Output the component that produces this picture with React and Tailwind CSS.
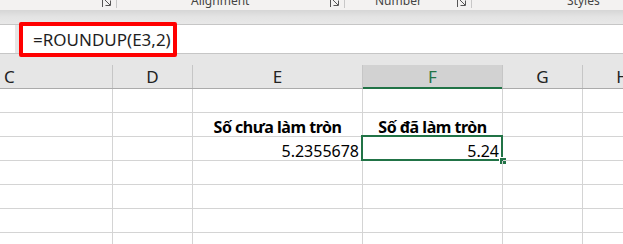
import React from "react";

function Launcher() {
  return (
    <span className="flex items-start h-[10px] overflow-hidden">
      <svg width="11" height="10" viewBox="0 0 11 10" className="mt-[-3px]" fill="none" stroke="#555" strokeWidth="1">
        <path d="M0.5 0.5 V10" />
        <path d="M2 2 L8 8" />
        <path d="M8.5 3.5 V8.5 H3.5" />
      </svg>
      <span className="ml-[3px] w-px h-[8px] bg-[#c8c8c8]" />
    </span>
  );
}

const cols = [
  { w: "w-[113px]", label: "C", align: "justify-start pl-[4px]" },
  { w: "w-[80px]", label: "D", align: "justify-center" },
  { w: "w-[170px]", label: "E", align: "justify-center" },
  { w: "w-[140px]", label: "F", align: "justify-center", sel: true },
  { w: "w-[80px]", label: "G", align: "justify-center" },
  { w: "w-[80px]", label: "H", align: "justify-center" },
];

function Row({ cells }) {
  return (
    <div className="flex h-[24px]">
      {cols.map((c, i) => {
        const cell = cells ? cells[i] : null;
        return (
          <div
            key={i}
            className={`relative shrink-0 ${c.w} h-[24px] border-r border-b border-[#d4d4d4] flex items-end px-[3px] pb-[1px] leading-none text-[16px] text-black whitespace-nowrap ${
              cell && cell.bold ? "font-bold justify-center tracking-[-0.5px]" : "justify-end"
            }`}
          >
            {cell ? cell.text : null}
            {cell && cell.selected ? (
              <>
                <div className="absolute left-[-2px] top-[-2px] right-[-1px] bottom-[-1px] border-2 border-[#217346] pointer-events-none" />
                <div className="absolute right-[-5px] bottom-[-5px] w-[8px] h-[8px] bg-[#217346] border border-white pointer-events-none" />
              </>
            ) : null}
          </div>
        );
      })}
    </div>
  );
}

export default function App() {
  return (
    <div
      className="w-[623px] h-[244px] overflow-hidden bg-white"
      style={{ fontFamily: '"Noto Sans", "Open Sans", sans-serif' }}
    >
      {/* Ribbon bottom (group labels) */}
      <div className="h-[10px] bg-[#f3f2f1] overflow-hidden flex items-start text-[12px] text-[#444] leading-[16px]">
        <div className="ml-[102px]">
          <Launcher />
        </div>
        <div className="ml-[74px] mt-[-7px] w-[60px]">Alignment</div>
        <div className="ml-[79px]">
          <Launcher />
        </div>
        <div className="ml-[30px] mt-[-7px] w-[50px]">Number</div>
        <div className="ml-[32px]">
          <Launcher />
        </div>
        <div className="ml-[95px] mt-[-7px]">Styles</div>
      </div>
      {/* shadow band */}
      <div className="h-[14px] bg-gradient-to-b from-[#d6d6d6] via-[#e4e4e4] to-[#e8e8e8]" />
      {/* formula bar */}
      <div className="relative h-[30px] bg-[#e6e6e6] border-t border-b border-[#c6c6c6] flex">
        <div className="w-[15px] h-full bg-white" />
        <div className="ml-[4px] flex-1 h-full bg-white flex items-center pl-[14px] text-[17px] text-[#1e1e1e] leading-none">
          =ROUNDUP(E3,2)
        </div>
        <div className="absolute left-[19px] top-[-3px] w-[158px] h-[35px] border-[4px] border-[#ff0000] rounded-[2px] pointer-events-none" />
      </div>
      {/* gap band */}
      <div className="h-[11px] bg-[#e6e6e6]" />
      {/* column headers */}
      <div className="flex h-[24px] bg-[#e6e6e6] border-b border-[#ababab]">
        {cols.map((c, i) => (
          <div
            key={i}
            className={`relative shrink-0 ${c.w} h-full flex items-center ${c.align} text-[17px] leading-none border-r border-[#c6c6c6] ${
              c.sel ? "bg-[#d2d2d2] text-[#217346]" : "text-[#222]"
            }`}
          >
            {c.label}
            {c.sel ? <div className="absolute left-0 right-0 bottom-[-1px] h-[2px] bg-[#217346]" /> : null}
          </div>
        ))}
      </div>
      <Row />
      <Row cells={[null, null, { text: "Số chưa làm tròn", bold: true }, { text: "Số đã làm tròn", bold: true }, null, null]} />
      <Row cells={[null, null, { text: "5.2355678" }, { text: "5.24", selected: true }, null, null]} />
      <Row />
      <Row />
      <Row />
      <Row />
    </div>
  );
}
